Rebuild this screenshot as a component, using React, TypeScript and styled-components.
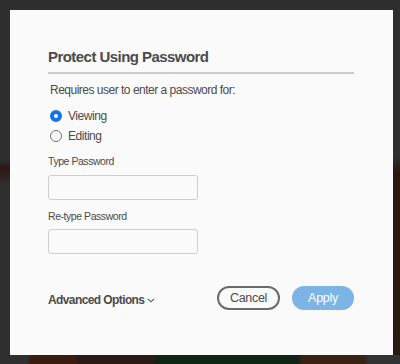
import React, { useState } from "react";
import styled, { createGlobalStyle } from "styled-components";

const GlobalStyle = createGlobalStyle`
  html, body { margin: 0; padding: 0; }
  body {
    width: 400px;
    height: 364px;
    overflow: hidden;
    background: #2e2e2e;
    font-family: "Liberation Sans", Arial, sans-serif;
  }
`;

const Backdrop = styled.div`
  position: relative;
  width: 400px;
  height: 364px;
  box-sizing: border-box;
  padding: 10px 7px 9px 10px;
  background:
    linear-gradient(90deg,
      #2f2f2f 0px, #2f2f2f 28px,
      #3a1b10 30px, #3a1b10 75px,
      #2b1a14 78px, #2b1a14 152px,
      #0f2413 156px, #0f2413 298px,
      #3a2212 302px, #3a2212 364px,
      #323232 368px) bottom / 100% 9px no-repeat,
    linear-gradient(180deg, transparent 0 158px, #2a1710 172px, #2a1a12 100%) right / 7px 100% no-repeat,
    linear-gradient(180deg, transparent 0 160px, #2c1812 168px, #2f2f2f 185px) left / 10px 100% no-repeat,
    #2e2e2e;
`;

const Dialog = styled.div`
  width: 383px;
  height: 345px;
  box-sizing: border-box;
  background: #fafafa;
  padding: 37px 39px 0 38px;
  display: flex;
  flex-direction: column;
  color: #4b4b4b;
`;

const Title = styled.h2`
  margin: 0;
  font-size: 15px;
  font-weight: 700;
  letter-spacing: -0.55px;
  line-height: 20px;
  padding: 0 0 5px;
  border-bottom: 2px solid #cbcbcb;
  color: #4b4b4b;
`;

const Description = styled.p`
  margin: 8px 0 0 2px;
  font-size: 12px;
  letter-spacing: -0.5px;
  line-height: 16px;
  color: #4b4b4b;
`;

const RadioGroup = styled.div`
  margin-top: 8px;
  display: flex;
  flex-direction: column;
`;

const RadioRow = styled.label`
  height: 20px;
  display: flex;
  align-items: center;
  gap: 6px;
  padding-left: 2px;
  font-size: 12px;
  letter-spacing: -0.45px;
  color: #4b4b4b;
  cursor: pointer;
`;

const RadioDot = styled.span<{ $checked: boolean }>`
  width: 12px;
  height: 12px;
  box-sizing: border-box;
  border-radius: 50%;
  border: ${(p) => (p.$checked ? "4px solid #1473e6" : "1.5px solid #747474")};
  background: ${(p) => (p.$checked ? "#ffffff" : "transparent")};
  flex: none;
`;

const FieldLabel = styled.div<{ $top: number }>`
  margin-top: ${(p) => p.$top}px;
  font-size: 10.5px;
  letter-spacing: -0.45px;
  line-height: 14px;
  color: #4b4b4b;
`;

const Input = styled.input<{ $top: number }>`
  margin-top: ${(p) => p.$top}px;
  width: 150px;
  height: 25px;
  box-sizing: border-box;
  border: 1px solid #cfcfcf;
  border-radius: 3px;
  background: #fafafa;
  outline: none;
  padding: 0 6px;
  font-family: inherit;
`;

const Footer = styled.div`
  margin-top: 32px;
  display: flex;
  align-items: center;
`;

const Advanced = styled.button`
  all: unset;
  display: flex;
  align-items: center;
  gap: 3px;
  margin-top: 4px;
  font-size: 12px;
  font-weight: 700;
  letter-spacing: -0.6px;
  line-height: 16px;
  color: #4b4b4b;
  cursor: pointer;
`;

const Buttons = styled.div`
  margin-left: auto;
  display: flex;
  gap: 12px;
`;

const PillButton = styled.button<{ $primary?: boolean }>`
  height: 24px;
  box-sizing: border-box;
  border-radius: 12px;
  font-family: "Liberation Sans", Arial, sans-serif;
  font-size: 12.5px;
  letter-spacing: -0.3px;
  padding: 0;
  cursor: pointer;
  width: ${(p) => (p.$primary ? "62px" : "63px")};
  border: ${(p) => (p.$primary ? "none" : "2px solid #6b6b6b")};
  background: ${(p) => (p.$primary ? "#7cb4e6" : "transparent")};
  color: ${(p) => (p.$primary ? "#ffffff" : "#4b4b4b")};
`;

const Chevron = () => (
  <svg width="8" height="5" viewBox="0 0 8 5" fill="none">
    <path d="M0.8 0.8 L4 3.8 L7.2 0.8" stroke="#555" strokeWidth="1.1" />
  </svg>
);

export default function App() {
  const [mode, setMode] = useState<"view" | "edit">("view");
  return (
    <>
      <GlobalStyle />
      <Backdrop>
        <Dialog>
          <Title>Protect Using Password</Title>
          <Description>Requires user to enter a password for:</Description>
          <RadioGroup>
            <RadioRow onClick={() => setMode("view")}>
              <RadioDot $checked={mode === "view"} />
              Viewing
            </RadioRow>
            <RadioRow onClick={() => setMode("edit")}>
              <RadioDot $checked={mode === "edit"} />
              Editing
            </RadioRow>
          </RadioGroup>
          <FieldLabel $top={8}>Type Password</FieldLabel>
          <Input $top={7} type="password" />
          <FieldLabel $top={9}>Re-type Password</FieldLabel>
          <Input $top={6} type="password" />
          <Footer>
            <Advanced>
              Advanced Options
              <Chevron />
            </Advanced>
            <Buttons>
              <PillButton>Cancel</PillButton>
              <PillButton $primary>Apply</PillButton>
            </Buttons>
          </Footer>
        </Dialog>
      </Backdrop>
    </>
  );
}
